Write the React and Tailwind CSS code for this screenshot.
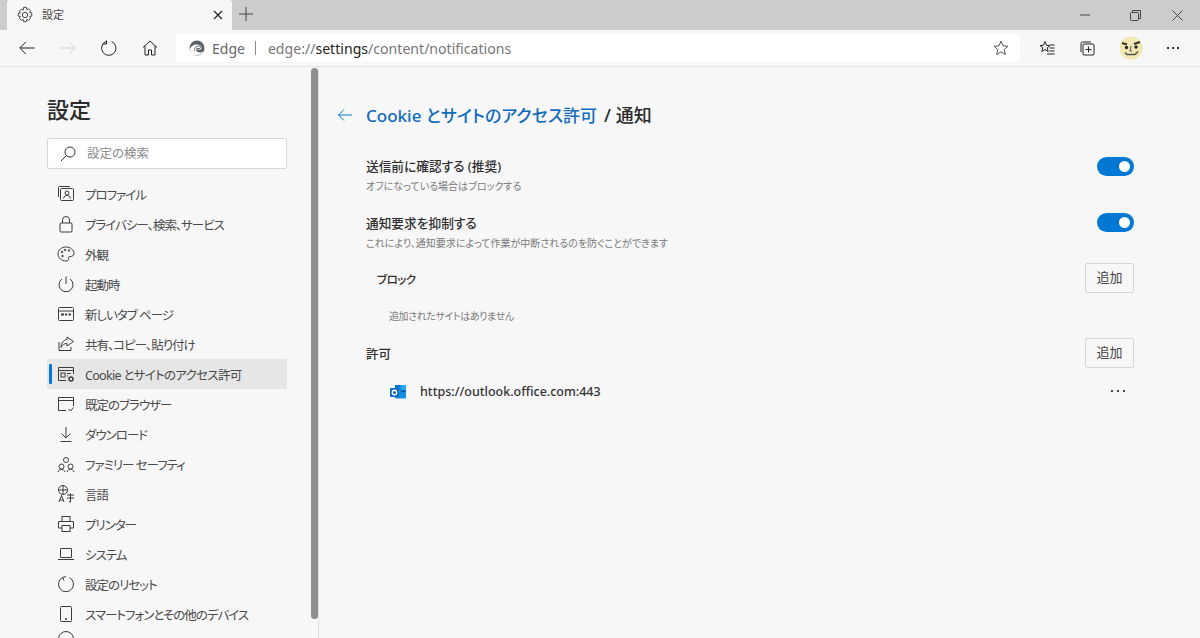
import React from "react";

const s = { fill: "none", stroke: "currentColor", strokeWidth: 1 };

const Ico = ({ children, size = 20, className = "" }) => (
  <svg width={size} height={size} viewBox="0 0 20 20" className={className} {...s}>
    {children}
  </svg>
);

const navItems = [
  ["プロファイル", <><path d="M2.500 13V3.500a1 1 0 0 1 1-1H14" /><rect x="4.500" y="4.500" width="13" height="12" rx="1" /><circle cx="11" cy="9" r="2" /><path d="M7.500 14.500c.5-2.500 2-3 3.500-3s3 .5 3.500 3" /></>],
  ["プライバシー、検索、サービス", <><rect x="4" y="9" width="12" height="9" rx="1" /><path d="M6.500 9V6a3.500 3.500 0 0 1 7 0v3" /></>],
  ["外観", <><path d="M10 3c4.500 0 8 3 8 6.500 0 2.500-2 3-4 3-1.500 0-2 1-1.500 2 .5 1.500-.5 2.500-2.500 2.500-4.500 0-8-3-8-7s3.500-7 8-7z" /><circle cx="6" cy="8" r=".8" /><circle cx="9" cy="6" r=".8" /><circle cx="13" cy="6.500" r=".8" /><circle cx="6.500" cy="12" r=".8" /></>],
  ["起動時", <><path d="M10 2.500V10" /><path d="M6 5a7 7 0 1 0 8 0" /></>],
  ["新しいタブ ページ", <><rect x="2.500" y="3.500" width="15" height="13" rx="1" /><path d="M2.500 7h15" /><path d="M5 10.500h3M9 10.500h2M12.500 10.500h2.500" strokeWidth="2" /></>],
  ["共有、コピー、貼り付け", <><path d="M11 3l6.500 4.500L11 12V9.500C8 9.500 6 11 5 13.500 5 9 7.500 6 11 5.500z" /><path d="M3 8v8.500h12V13" /></>],
  ["Cookie とサイトのアクセス許可", <><path d="M17.500 10V3.500h-15v13H10" /><path d="M2.500 6.500h15" /><rect x="5" y="9" width="4" height="4" /><path d="M11 9.500h4M11 12h1" /><circle cx="15" cy="15" r="2" strokeWidth="1.500" /></>],
  ["既定のブラウザー", <><path d="M10 16.500H2.500v-13h15V12" /><path d="M2.500 6.500h15" /><path d="M12.500 15l2 2 3-3.500" /></>],
  ["ダウンロード", <><path d="M10 3v11M5.500 9.500L10 14l4.500-4.500M4.500 17.500h11" /></>],
  ["ファミリー セーフティ", <><circle cx="10" cy="6" r="2.500" /><circle cx="5.500" cy="12.500" r="2.500" /><circle cx="14.500" cy="12.500" r="2.500" /><path d="M2 18c.5-2 2-2.500 3.500-2.500S8.500 16 9 18M11 18c.5-2 2-2.500 3.500-2.500S17.500 16 18 18" /></>],
  ["言語", <><circle cx="7" cy="6" r="4.500" /><path d="M2.500 6h9M7 1.500v9" /><path d="M3 18l2.500-6.500L8 18M3.800 16h3.500M11 11h7M14.500 9.500V18l-1.500-.5M11 14h7" /></>],
  ["プリンター", <><rect x="6" y="2.500" width="8" height="5" /><path d="M6 14H2.500V7.500h15V14H14" /><rect x="6" y="11.500" width="8" height="6" /></>],
  ["システム", <><rect x="4.500" y="4.500" width="11" height="9" rx=".5" /><path d="M2 15.500h16" /></>],
  ["設定のリセット", <><path d="M6.500 3.600a7.500 7.500 0 1 0 7 0" /><path d="M10 2.500l-3.500 1 1.500 3" /></>],
  ["スマートフォンとその他のデバイス", <><rect x="4.500" y="2.500" width="11" height="15" rx="1" /><path d="M9 15h2" strokeWidth="1.500" /></>],
];

const Toggle = () => (
  <div className="w-[37px] h-[19px] rounded-full bg-[#0078d4] flex items-center justify-end pr-[4px]">
    <div className="w-[11px] h-[11px] rounded-full bg-white" />
  </div>
);

const AddButton = () => (
  <button className="w-[49px] h-[30px] border border-[#d6d6d6] rounded-[2px] text-[13px] text-[#444444] bg-[#f7f7f7]">
    追加
  </button>
);

const Face = () => (
  <svg width="24" height="24" viewBox="0 0 24 24">
    <circle cx="12" cy="12" r="11.500" fill="#f2e7b0" />
    <path d="M3 7l5 1.500M21 6l-6 2" stroke="#333" strokeWidth="2.200" fill="none" />
    <circle cx="7.500" cy="11.500" r="1.700" fill="#222" />
    <circle cx="17" cy="11" r="1.700" fill="#222" />
    <path d="M12 10l-1 5h2" stroke="#555" fill="none" />
    <path d="M6 16.500l2 2h8l3-3" stroke="#555" strokeWidth="1.500" fill="none" />
  </svg>
);

const EdgeLogo = () => (
  <svg width="16" height="16" viewBox="0 0 16 16">
    <circle cx="8" cy="8" r="7.500" fill="#5a6268" />
    <path d="M1 9c1-3 3.500-4.500 6.500-4.500 2.500 0 5 1 5 3.500 0 1-1 1.500-2 1.500H7c0 2 2 3 4 3 1.500 0 2.500-.5 3.500-1-1 2-3.500 3.500-6.500 3.500C4 15.500 1 13 1 9z" fill="#ffffff" />
    <path d="M5.500 10.500c0-3 2-4.500 4.500-4.500 1 0 1.500.5 1.500 1.500 0 .5-.5 1-1 1H7.500" fill="none" stroke="#5a6268" strokeWidth="1" />
  </svg>
);

const OutlookLogo = () => (
  <svg width="16" height="16" viewBox="0 0 16 16">
    <rect x="5" y="1" width="11" height="11" fill="#28a8ea" />
    <rect x="5" y="1" width="5.500" height="5" fill="#0078d4" />
    <rect x="10.500" y="6" width="5.500" height="6" fill="#0364b8" />
    <path d="M5 8l11 0v5.500a1 1 0 0 1-1 1H6a1 1 0 0 1-1-1z" fill="#1490df" />
    <rect x="0" y="4" width="9" height="9" rx="1" fill="#0f6cbd" />
    <circle cx="4.500" cy="8.500" r="2.200" fill="none" stroke="#fff" strokeWidth="1.400" />
  </svg>
);

const Sidebar = () => (
  <aside className="relative w-[319px] shrink-0 border-r border-[#e0e0e0] pl-[47px] pt-[27px] overflow-hidden">
    <h1 className="text-[22px] leading-[30px] font-medium text-[#2b2b2b]">設定</h1>
    <div className="mt-[14px] w-[240px] h-[31px] bg-white border border-[#d6d6d6] rounded-[2px] flex items-center pl-[11px]">
      <svg width="18" height="18" viewBox="0 0 18 18" className="text-[#333333]" {...s}>
        <circle cx="11" cy="7" r="5" />
        <path d="M7.500 10.500L2 16" />
      </svg>
      <span className="ml-[10px] mt-[2px] text-[12.500px] text-[#8a8a8a]">設定の検索</span>
    </div>
    <nav className="mt-[10px] w-[240px]">
      {navItems.map(([label, icon]) => {
        const active = label.startsWith("Cookie");
        return (
          <div
            key={label}
            className={`relative h-[30px] flex items-center pl-[9px] rounded-[2px] ${active ? "bg-[#e6e6e6]" : ""}`}
          >
            {active && <div className="absolute left-[2px] top-[5px] w-[3px] h-[20px] bg-[#0078d4] rounded-[1px]" />}
            <Ico className="text-[#3c3c3c] shrink-0">{icon}</Ico>
            <span className={`ml-[9px] mt-[4px] text-[12.500px] text-[#4a4a4a] whitespace-nowrap ${active ? "tracking-[-0.7px]" : "tracking-[-1px]"}`}>{label}</span>
          </div>
        );
      })}
      <div className="h-[30px] flex items-start pl-[9px]">
        <Ico className="text-[#3c3c3c]"><circle cx="10" cy="10" r="7.500" /></Ico>
      </div>
    </nav>
    <div className="absolute right-0 top-[1px] w-[7px] h-[551px] bg-[#8e8e8e] rounded-full" />
  </aside>
);

const Main = () => (
  <main className="flex-1 pl-[18px] pr-[66px] pt-[35px] min-w-0">
    <div className="flex items-center h-[26px]">
      <svg width="16" height="16" viewBox="0 0 16 16" fill="none" stroke="#0078d4" strokeWidth="1">
        <path d="M15 8H1.500M7 2.500L1.500 8 7 13.500" />
      </svg>
      <h2 className="ml-[13px] font-medium text-[#2b2b2b] whitespace-nowrap flex items-baseline">
        <span className="text-[17px] text-[#0f6cbd]">Cookie とサイトのアクセス許可</span>
        <span className="ml-[7px] text-[18px]">/ 通知</span>
      </h2>
    </div>
    <div className="pl-[29px]">
      <div className="mt-[28px] flex items-start justify-between h-[46px]">
        <div>
          <div className="text-[12.700px] leading-[20px] font-medium text-[#2f2f2f]">送信前に確認する (推奨)</div>
          <div className="mt-[3px] text-[10px] leading-[14px] text-[#7a7a7a]">オフになっている場合はブロックする</div>
        </div>
        <div className="mt-[1px]"><Toggle /></div>
      </div>
      <div className="mt-[11px] flex items-start justify-between h-[48px]">
        <div>
          <div className="text-[12.700px] leading-[20px] font-medium text-[#2f2f2f]">通知要求を抑制する</div>
          <div className="mt-[3px] text-[10px] leading-[14px] text-[#7a7a7a]">これにより、通知要求によって作業が中断されるのを防ぐことができます</div>
        </div>
        <Toggle />
      </div>
      <div className="mt-[2px] flex items-center justify-between h-[30px] pl-[11px]">
        <span className="mt-[4px] text-[11.500px] tracking-[-0.5px] font-medium text-[#2f2f2f]">ブロック</span>
        <AddButton />
      </div>
      <div className="mt-[14px] pl-[23px] text-[10px] tracking-[-0.4px] leading-[18px] text-[#7a7a7a]">追加されたサイトはありません</div>
      <div className="mt-[13px] flex items-center justify-between h-[30px]">
        <span className="mt-[4px] text-[12.500px] font-medium text-[#2f2f2f]">許可</span>
        <AddButton />
      </div>
      <div className="mt-[9px] flex items-center justify-between h-[30px] pl-[24px] pr-[9px]">
        <div className="flex items-center">
          <OutlookLogo />
          <span className="ml-[14px] text-[12.500px] font-medium text-[#333333]">https://outlook.office.com:443</span>
        </div>
        <div className="flex gap-[4px] mb-[2px]">
          <i className="w-[2px] h-[2px] bg-[#444444]" />
          <i className="w-[2px] h-[2px] bg-[#444444]" />
          <i className="w-[2px] h-[2px] bg-[#444444]" />
        </div>
      </div>
    </div>
  </main>
);

export default function App() {
  return (
    <div
      className="w-[1200px] h-[638px] overflow-hidden bg-[#f7f7f7] flex flex-col [font-feature-settings:'palt']"
      style={{ fontFamily: '"Noto Sans", "Noto Sans CJK JP", sans-serif' }}
    >
      {/* tab strip */}
      <div className="h-[30px] bg-[#cccccc] flex items-end shrink-0">
        <div className="ml-[7px] w-[225px] h-[30px] bg-[#f7f7f7] rounded-t-[3px] flex items-center pl-[9px] pr-[9px]">
          <svg width="18" height="18" viewBox="0 0 20 20" className="text-[#333333]" {...s}>
            <circle cx="10" cy="10" r="3" />
            <path d="M8.500 1.500h3l.5 2.500 2-1 2.200 2.200-1 2 2.300.5v3.500l-2.300.5 1 2-2.200 2.200-2-1-.5 2.500h-3l-.5-2.500-2 1-2.200-2.200 1-2-2.300-.5V8.200l2.300-.5-1-2L6 3.500l2 1z" />
          </svg>
          <span className="ml-[8px] text-[11px] text-[#444444]">設定</span>
          <svg width="10" height="10" viewBox="0 0 10 10" className="ml-auto text-[#222222]" {...s} strokeWidth="1.200">
            <path d="M1 1l8 8M9 1l-8 8" />
          </svg>
        </div>
        <svg width="14" height="14" viewBox="0 0 14 14" className="ml-[7px] mb-[9px] text-[#444444]" {...s}>
          <path d="M7 0v14M0 7h14" />
        </svg>
        <div className="ml-auto h-[30px] flex items-center text-[#444444]">
          <svg width="10" height="10" viewBox="0 0 10 10" {...s}><path d="M0 5h10" /></svg>
          <svg width="11" height="11" viewBox="0 0 11 11" className="ml-[40px]" {...s}>
            <rect x=".5" y="2.500" width="8" height="8" rx="1" /><path d="M2.500 2.500V.5h8v8h-2" />
          </svg>
          <svg width="11" height="11" viewBox="0 0 11 11" className="ml-[31px] mr-[17px]" {...s}>
            <path d="M.5.5l10 10M10.500.5l-10 10" />
          </svg>
        </div>
      </div>

      {/* toolbar */}
      <div className="h-[36px] bg-[#f7f7f7] border-b border-[#e3e3e3] flex items-center shrink-0 box-content">
        <svg width="16" height="16" viewBox="0 0 16 16" className="ml-[19px] text-[#222222]" {...s}>
          <path d="M15.500 8H.8M7 1.800L.8 8 7 14.200" />
        </svg>
        <svg width="16" height="16" viewBox="0 0 16 16" className="ml-[25px] text-[#cfcfcf]" {...s}>
          <path d="M.5 8h14.700M9 1.800L15.200 8 9 14.200" />
        </svg>
        <svg width="16" height="16" viewBox="0 0 16 16" className="ml-[25px] text-[#222222]" {...s}>
          <path d="M5 1.500a7.200 7.200 0 1 0 5.500 0" />
          <path d="M4 0.500v3.500h-3.500" transform="translate(1.500 0)" />
        </svg>
        <svg width="16" height="16" viewBox="0 0 16 16" className="ml-[25px] text-[#222222]" {...s}>
          <path d="M1 7.500L8 1l7 6.500M3 6v9h3.500v-5h3v5H13V6" />
        </svg>
        <div className="ml-[18px] w-[844px] h-[28px] bg-white rounded-[3px] flex items-center pl-[13px] pr-[11px]">
          <EdgeLogo />
          <span className="ml-[7px] text-[14px] text-[#666666]">Edge</span>
          <span className="ml-[10px] w-px h-[14px] bg-[#888888]" />
          <span className="ml-[12px] mt-[2px] text-[14.100px] text-[#767676]">
            edge://<span className="text-[#222222]">settings</span>/content/notifications
          </span>
          <svg width="16" height="16" viewBox="0 0 16 16" className="ml-auto text-[#555555]" {...s}>
            <path d="M8 1l2 4.800 5 .4-3.800 3.300 1.200 5L8 11.800 3.600 14.500l1.200-5L1 6.200l5-.4z" />
          </svg>
        </div>
        <svg width="16" height="16" viewBox="0 0 16 16" className="ml-[19px] text-[#222222]" {...s}>
          <path d="M6 1.500l1.500 3.800 3.500.2-2.800 2.300 1 3.700L6 9.500l-3.200 2 1-3.700L1 5.500l3.500-.2z" />
          <path d="M10.500 8h5M10.500 11h5M8 14h7.500M11 5h4.500" />
        </svg>
        <svg width="16" height="16" viewBox="0 0 16 16" className="ml-[24px] text-[#222222]" {...s}>
          <rect x="4" y="4" width="11" height="11" rx="1" />
          <path d="M2 12V3.500A1.500 1.500 0 0 1 3.500 2H12M9.500 6.500v6M6.500 9.500h6" />
        </svg>
        <div className="ml-[24px]"><Face /></div>
        <div className="ml-[24px] flex gap-[3px]">
          <i className="w-[2px] h-[2px] bg-[#333333]" />
          <i className="w-[2px] h-[2px] bg-[#333333]" />
          <i className="w-[2px] h-[2px] bg-[#333333]" />
        </div>
      </div>

      <div className="flex flex-1 min-h-0">
        <Sidebar />
        <Main />
      </div>
    </div>
  );
}
